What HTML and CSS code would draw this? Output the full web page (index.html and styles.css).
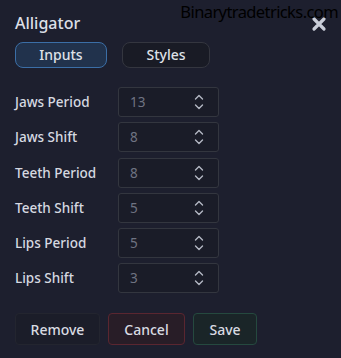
FILE: index.html
```html
<!DOCTYPE html>
<html lang="en">
<head>
  <meta charset="UTF-8">
  <title>Alligator</title>
  <link rel="stylesheet" href="styles.css">
</head>
<body>
  <div class="panel">
    <div class="watermark">Binarytradetricks.com</div>

    <div class="head">
      <div class="title">Alligator</div>
      <svg class="close" width="16" height="16" viewBox="0 0 16 16">
        <path d="M3 3 L13 13 M13 3 L3 13" stroke="#c9cdd8" stroke-width="3.2" stroke-linecap="round"/>
      </svg>
    </div>

    <div class="tabs">
      <div class="tab active">Inputs</div>
      <div class="tab">Styles</div>
    </div>

    <div class="fields">
      <label class="label">Jaws Period</label>
      <div class="num"><span>13</span><svg class="spin" width="10" height="20" viewBox="0 0 10 20"><path d="M1.5 7 L5 3.5 L8.5 7 M1.5 13 L5 16.5 L8.5 13" fill="none" stroke="#b4b8c4" stroke-width="1.4" stroke-linecap="round" stroke-linejoin="round"/></svg></div>

      <label class="label">Jaws Shift</label>
      <div class="num"><span>8</span><svg class="spin" width="10" height="20" viewBox="0 0 10 20"><path d="M1.5 7 L5 3.5 L8.5 7 M1.5 13 L5 16.5 L8.5 13" fill="none" stroke="#b4b8c4" stroke-width="1.4" stroke-linecap="round" stroke-linejoin="round"/></svg></div>

      <label class="label">Teeth Period</label>
      <div class="num"><span>8</span><svg class="spin" width="10" height="20" viewBox="0 0 10 20"><path d="M1.5 7 L5 3.5 L8.5 7 M1.5 13 L5 16.5 L8.5 13" fill="none" stroke="#b4b8c4" stroke-width="1.4" stroke-linecap="round" stroke-linejoin="round"/></svg></div>

      <label class="label">Teeth Shift</label>
      <div class="num"><span>5</span><svg class="spin" width="10" height="20" viewBox="0 0 10 20"><path d="M1.5 7 L5 3.5 L8.5 7 M1.5 13 L5 16.5 L8.5 13" fill="none" stroke="#b4b8c4" stroke-width="1.4" stroke-linecap="round" stroke-linejoin="round"/></svg></div>

      <label class="label">Lips Period</label>
      <div class="num"><span>5</span><svg class="spin" width="10" height="20" viewBox="0 0 10 20"><path d="M1.5 7 L5 3.5 L8.5 7 M1.5 13 L5 16.5 L8.5 13" fill="none" stroke="#b4b8c4" stroke-width="1.4" stroke-linecap="round" stroke-linejoin="round"/></svg></div>

      <label class="label">Lips Shift</label>
      <div class="num"><span>3</span><svg class="spin" width="10" height="20" viewBox="0 0 10 20"><path d="M1.5 7 L5 3.5 L8.5 7 M1.5 13 L5 16.5 L8.5 13" fill="none" stroke="#b4b8c4" stroke-width="1.4" stroke-linecap="round" stroke-linejoin="round"/></svg></div>
    </div>

    <div class="actions">
      <button class="btn remove">Remove</button>
      <button class="btn cancel">Cancel</button>
      <button class="btn save">Save</button>
    </div>
  </div>
</body>
</html>
```

FILE: styles.css
```css
html, body {
  margin: 0;
  background: #1d1f2e;
}
.panel {
  position: relative;
  width: 341px;
  height: 358px;
  box-sizing: border-box;
  padding: 12px 14px 0 15px;
  font-family: "Noto Sans", "Open Sans", sans-serif;
  color: #d9dce4;
  background: #1d1f2e;
}
.watermark {
  position: absolute;
  top: 0;
  right: 3px;
  font-family: "Noto Sans", sans-serif;
  font-size: 16.5px;
  color: #000;
  letter-spacing: -0.6px;
  white-space: nowrap;
}
.head {
  display: flex;
  justify-content: space-between;
  align-items: center;
  height: 22px;
}
.title {
  font-size: 16px;
  font-weight: 500;
  color: #dcdfe6;
}
.close { margin-top: 2px; }
.tabs {
  display: flex;
  gap: 15px;
  margin-top: 8px;
}
.tab {
  width: 88px;
  height: 26px;
  box-sizing: border-box;
  border: 1px solid #34363f;
  border-radius: 8px;
  background: #191b25;
  font-size: 14px;
  font-weight: 500;
  line-height: 24px;
  text-align: center;
  color: #dfe1e7;
}
.tab.active {
  width: 92px;
  border: 1.5px solid #3b6ea6;
  background: #21324c;
  line-height: 23px;
}
.fields {
  display: grid;
  grid-template-columns: 103px 101px;
  grid-auto-rows: 30px;
  row-gap: 5.3px;
  align-items: center;
  margin-top: 19px;
}
.label {
  font-size: 13.5px;
  font-weight: 500;
  color: #d6d9e1;
}
.num {
  height: 30px;
  box-sizing: border-box;
  border: 1px solid #33363f;
  border-radius: 3px;
  background: #1a1c28;
  display: flex;
  align-items: center;
  justify-content: space-between;
  padding: 0 14px 0 11px;
  font-size: 13.5px;
  color: #6f7382;
}
.actions {
  display: flex;
  gap: 8px;
  margin-top: 20px;
}
.btn {
  height: 32px;
  box-sizing: border-box;
  border-radius: 4px;
  font-family: "Noto Sans", "Open Sans", sans-serif;
  font-size: 14px;
  font-weight: 500;
  color: #d9dbe2;
  cursor: pointer;
}
.remove {
  width: 85px;
  border: 1px solid #23252f;
  background: #1b1d29;
}
.cancel {
  width: 77px;
  border: 1px solid #5a2630;
  background: #281d27;
}
.save {
  width: 64px;
  border: 1px solid #25493f;
  background: #1a2528;
}
```
